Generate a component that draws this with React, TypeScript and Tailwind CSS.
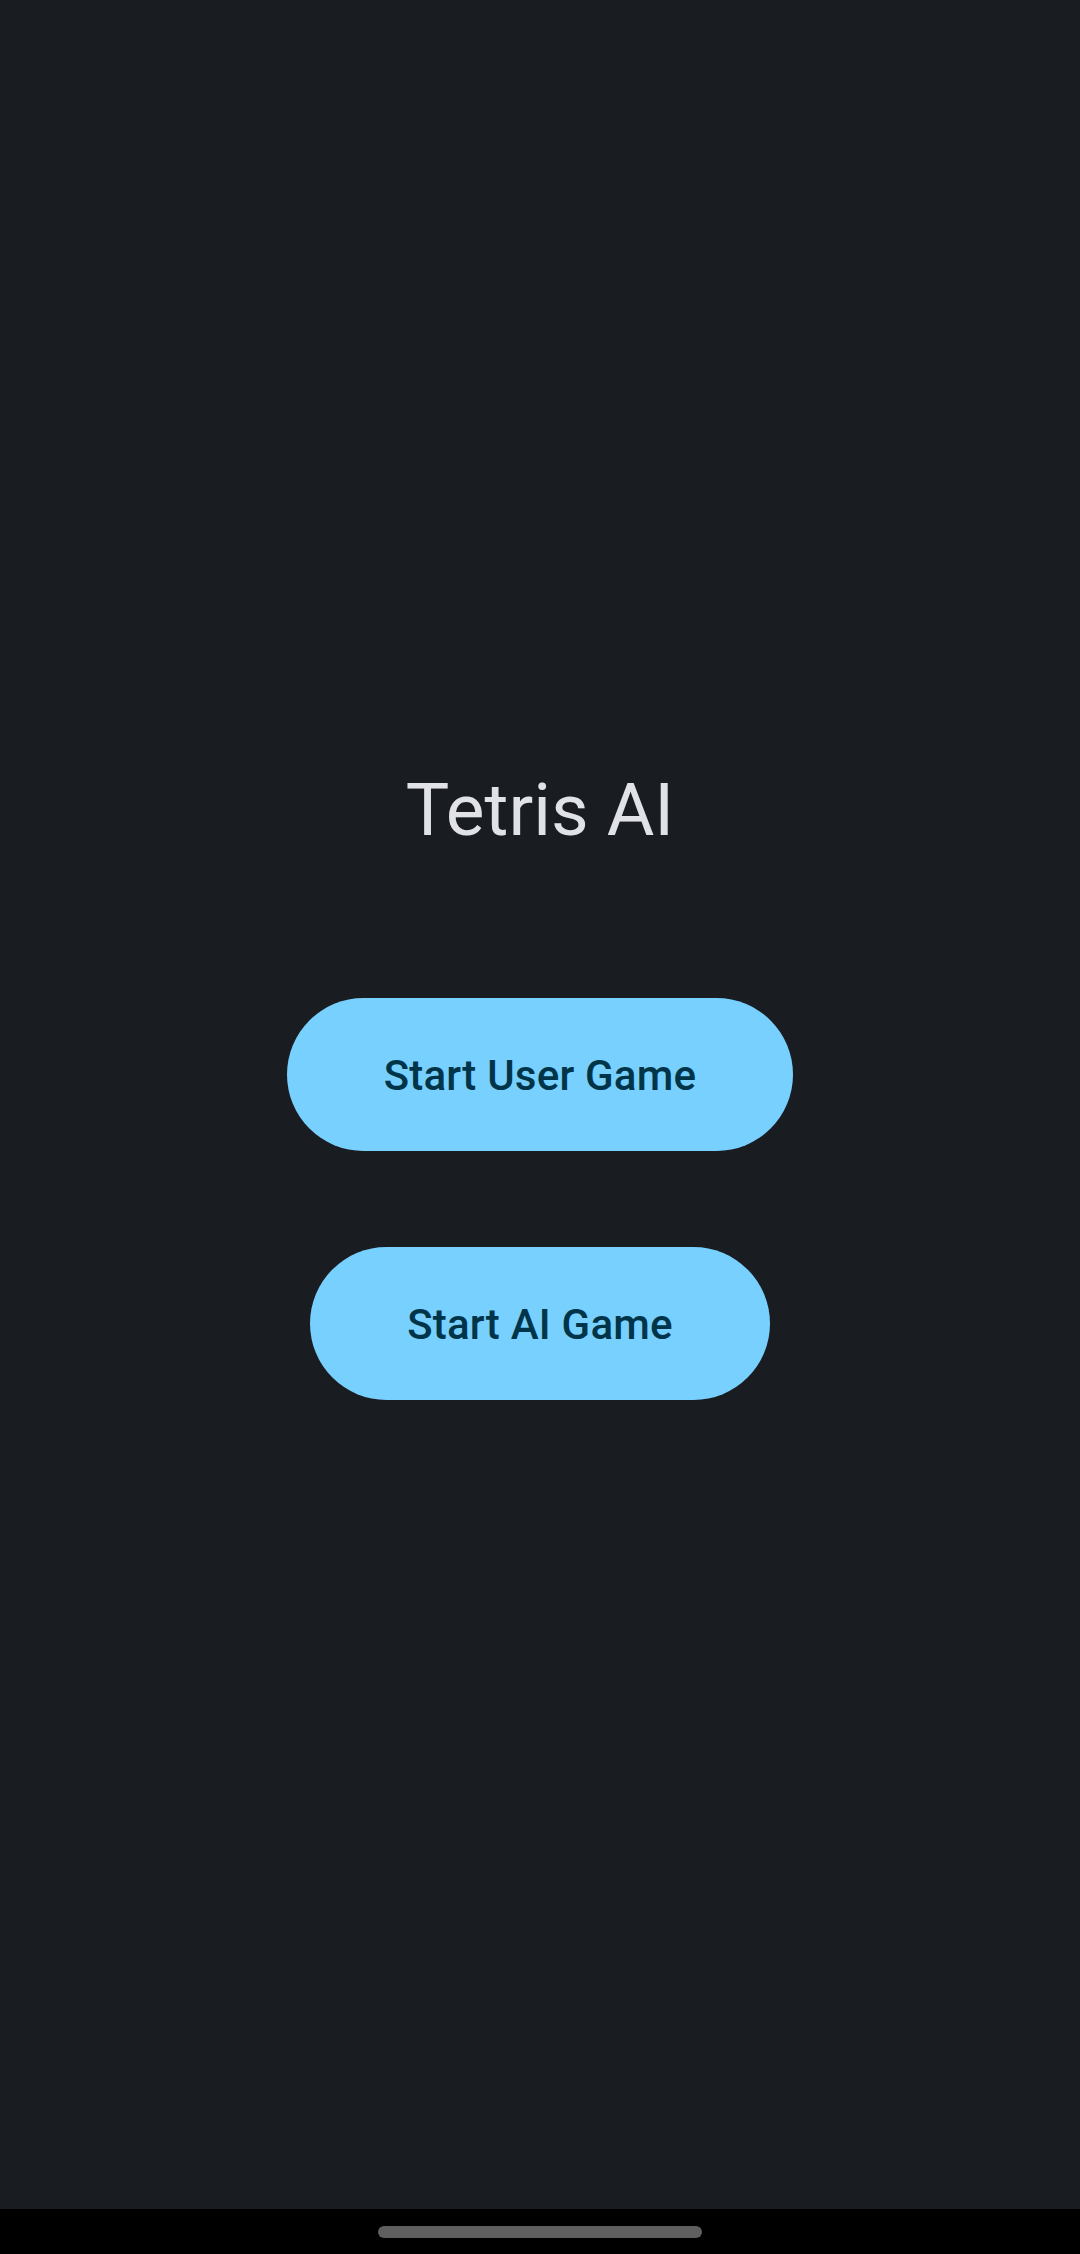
export default function App() {
  return (
    <div className="flex h-[2254px] w-[1080px] flex-col bg-[#191c20] font-['Roboto',sans-serif]">
      <main className="flex flex-1 flex-col items-center pt-[766px]">
        <h1 className="text-[73px] leading-[88px] font-normal text-[#e1e2e8]">Tetris AI</h1>
        <div className="mt-[144px] flex flex-col items-center gap-[96px]">
          <button className="h-[153px] rounded-full bg-[#78d0ff] px-[97px] pt-[2px] font-['Roboto_Medium','Roboto',sans-serif] text-[42px] font-medium tracking-[0.2px] text-[#003549]">
            Start User Game
          </button>
          <button className="h-[153px] rounded-full bg-[#78d0ff] px-[97px] pt-[2px] font-['Roboto_Medium','Roboto',sans-serif] text-[42px] font-medium tracking-[0.2px] text-[#003549]">
            Start AI Game
          </button>
        </div>
      </main>
      <div className="flex h-[45px] items-start justify-center bg-black pt-[17px]">
        <div className="h-[12px] w-[324px] rounded-full bg-[#5f5f5f]" />
      </div>
    </div>
  )
}
